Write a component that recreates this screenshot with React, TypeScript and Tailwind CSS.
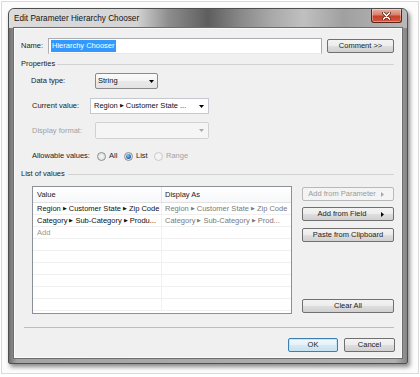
import React from 'react';

const btn =
  'flex items-center rounded-[2px] border border-[#707070] bg-[linear-gradient(#f3f3f3_0%,#ececec_48%,#dedede_52%,#d0d0d0_100%)] text-[#1b1b1b]';

function Down({ color = '#000' }: { color?: string }) {
  return (
    <svg width="5" height="3" viewBox="0 0 5 3">
      <path d="M0 0H5L2.5 3Z" fill={color} />
    </svg>
  );
}

function Right({ color = '#000' }: { color?: string }) {
  return (
    <svg width="3" height="5" viewBox="0 0 3 5">
      <path d="M0 0V5L3 2.5Z" fill={color} />
    </svg>
  );
}

function Path({ parts }: { parts: string[] }) {
  return (
    <>
      {parts.map((p, i) => (
        <React.Fragment key={i}>
          {i > 0 && <span className="px-[2px] text-[5px] align-[1px]">▶</span>}
          {p}
        </React.Fragment>
      ))}
    </>
  );
}

function Radio({ checked, disabled, label, width }: { checked?: boolean; disabled?: boolean; label: string; width: string }) {
  return (
    <div className={`flex items-center ${width}`}>
      <div
        className={`flex h-[9px] w-[9px] items-center justify-center rounded-full border ${
          disabled ? 'border-[#c9c9c9] bg-[#f4f4f4]' : 'border-[#8e8f8f] bg-[radial-gradient(circle,#f6f6f6,#d9d9d9)]'
        }`}
      >
        {checked && <div className="h-[5px] w-[5px] rounded-full bg-[radial-gradient(circle_at_40%_35%,#8fc4f2,#1d5ea6_70%)]" />}
      </div>
      <span className={`ml-[3px] ${disabled ? 'text-[#a3a3a3]' : 'text-[#1b1b1b]'}`}>{label}</span>
    </div>
  );
}

const rows: { value: string[]; display: string[]; add?: boolean }[] = [
  { value: ['Region', 'Customer State', 'Zip Code'], display: ['Region', 'Customer State', 'Zip Code'] },
  { value: ['Category', 'Sub-Category', 'Produ...'], display: ['Category', 'Sub-Category', 'Prod...'] },
  { value: ['Add'], display: [], add: true },
  { value: [], display: [] },
  { value: [], display: [] },
  { value: [], display: [] },
  { value: [], display: [] },
  { value: [], display: [] },
  { value: [], display: [] },
];

export default function App() {
  return (
    <div className="h-[377px] w-[420px] bg-white p-px font-[Liberation_Sans,Arial,sans-serif] text-[7.5px] leading-none">
      <div className="h-[373px] w-[418px] border border-[#dadada] bg-[#fcfcfc] pl-[6px] pt-[6px]">
        <div className="flex h-[356px] w-[400px] flex-col rounded-t-[6px] rounded-b-[2px] border border-[#4f4f4f] bg-[linear-gradient(90deg,#6f6f6f_0%,#a4a4a4_2%,#b0b0b0_97%,#858585_100%)] shadow-[2px_3px_4px_rgba(0,0,0,0.45)]">
          <div className="flex h-[19px] items-start justify-between rounded-t-[5px] bg-[linear-gradient(90deg,#dcdcdc_0%,#d4d4d4_32%,#8e8e8e_40%,#5e5e5e_50%,#888888_58%,#a9a9a9_66%,#c0c0c0_74%,#a0a0a0_84%,#b9b9b9_100%)]">
            <span className="pl-[5px] pt-[6px] text-[8.2px] text-[#111]">Edit Parameter Hierarchy Chooser</span>
            <div className="mr-[5px] flex h-[14px] w-[31px] items-center justify-center rounded-b-[3px] rounded-t-[1px] border border-t-0 border-[#5e2318] bg-[linear-gradient(#eab0a2_0%,#d9806c_45%,#c4412a_55%,#d3563d_100%)] shadow-[inset_0_0_0_1px_rgba(255,255,255,0.35)]">
              <svg width="9" height="8" viewBox="0 0 9 8">
                <path d="M1.5 1L7.5 7M7.5 1L1.5 7" stroke="#4a1a12" strokeWidth="3" strokeLinecap="round" />
                <path d="M1.5 1L7.5 7M7.5 1L1.5 7" stroke="#ffffff" strokeWidth="1.7" strokeLinecap="round" />
              </svg>
            </div>
          </div>

          <div className="mx-[5px] flex h-[330px] flex-col bg-[#f0f0f0] shadow-[0_0_0_1px_#6c6c6c,inset_0_0_0_1px_#fbfbfb]">
            <div className="mt-[10px] flex h-[16px] items-center pl-[7px]">
              <span className="w-[27px] text-[#1b1b1b]">Name:</span>
              <div className="flex h-[16px] w-[274px] items-center border border-[#abadb3] border-b-[#e3e9ef] bg-white pl-[2px]">
                <span className="bg-[#3399ff] px-px py-[2px] text-white">Hierarchy Chooser</span>
              </div>
              <div className={`${btn} ml-[5px] h-[14px] w-[67px] justify-center`}>Comment &gt;&gt;</div>
            </div>

            <div className="mt-[5px] flex h-[10px] items-center pl-[7px] pr-[8px]">
              <span className="text-[#1b1b1b]">Properties</span>
              <div className="ml-[2px] h-px flex-1 bg-[#d2d2d2]" />
            </div>

            <div className="mt-[4px] flex h-[16px] items-center pl-[17px]">
              <span className="w-[64px] text-[#1b1b1b]">Data type:</span>
              <div className="flex h-[16px] w-[63px] items-center justify-between rounded-[2px] border border-[#8a8a8a] bg-[linear-gradient(#fbfbfb_0%,#f3f3f3_50%,#e9e9e9_51%,#e3e3e3_100%)] pl-[2px] pr-[3px] text-[#111]">
                <span>String</span>
                <Down />
              </div>
            </div>

            <div className="mt-[9px] flex h-[16px] items-center pl-[18px]">
              <span className="w-[58px] text-[#1b1b1b]">Current value:</span>
              <div className="flex h-[16px] w-[119px] items-center justify-between border border-[#c5c8cf] bg-white pl-[3px] pr-[4px] text-[#111]">
                <span>
                  <Path parts={['Region', 'Customer State ...']} />
                </span>
                <Down />
              </div>
            </div>

            <div className="mt-[8px] flex h-[17px] items-center pl-[18px]">
              <span className="w-[63px] text-[#a2a2a2]">Display format:</span>
              <div className="flex h-[17px] w-[114px] items-center justify-end rounded-[2px] border border-[#d1d1d1] bg-[#f5f5f5] pr-[4px]">
                <Down color="#a8a8a8" />
              </div>
            </div>

            <div className="mt-[11px] flex h-[12px] items-center pl-[18px]">
              <span className="w-[65px] text-[#1b1b1b]">Allowable values:</span>
              <Radio label="All" width="w-[27px]" />
              <Radio label="List" checked width="w-[30px]" />
              <Radio label="Range" disabled width="w-[40px]" />
            </div>

            <div className="mt-[7px] flex h-[10px] items-center pl-[7px] pr-[8px]">
              <span className="text-[#1b1b1b]">List of values</span>
              <div className="ml-[3px] h-px flex-1 bg-[#d2d2d2]" />
            </div>

            <div className="mt-[7px] flex h-[128px] pl-[18px]">
              <div className="flex w-[260px] flex-col border border-[#8c9098] bg-white">
                <div className="flex h-[16px] border-b border-[#e2e2e2] bg-[linear-gradient(#ffffff,#f7f8fa)] text-[#1b1b1b]">
                  <div className="flex w-[129px] items-center border-r border-[#e4e4e4] pl-[4px]">Value</div>
                  <div className="flex flex-1 items-center pl-[3px]">Display As</div>
                </div>
                {rows.map((r, i) => (
                  <div key={i} className="flex h-[12px] border-b border-[#f0f0f0]">
                    <div className={`flex w-[129px] items-center border-r border-[#f0f0f0] pl-[4px] ${r.add ? 'text-[#979797]' : 'text-[#111]'}`}>
                      {r.value.length > 0 && <Path parts={r.value} />}
                    </div>
                    <div className="flex flex-1 items-center pl-[3px] text-[#7a7a7a]">
                      {r.display.length > 0 && <Path parts={r.display} />}
                    </div>
                  </div>
                ))}
              </div>

              <div className="ml-[10px] flex w-[92px] flex-col">
                <div className="mt-px flex h-[14px] items-center rounded-[2px] border border-[#b7b9bb] bg-[#f4f4f4] pr-[9px] text-[#9b9b9b]">
                  <span className="flex-1 text-center">Add from Parameter</span>
                  <Right color="#a8a8a8" />
                </div>
                <div className={`${btn} mt-[6px] h-[14px] pr-[9px]`}>
                  <span className="flex-1 text-center">Add from Field</span>
                  <Right />
                </div>
                <div className={`${btn} mt-[7px] h-[14px] justify-center`}>Paste from Clipboard</div>
                <div className="flex-1" />
                <div className={`${btn} mb-px h-[14px] justify-center`}>Clear All</div>
              </div>
            </div>

            <div className="ml-[10px] mr-[8px] mt-[13px] h-px bg-[#bdbdbd]" />

            <div className="mt-[10px] flex justify-end gap-[6px] pr-[7px]">
              <div className="flex h-[14px] w-[50px] items-center justify-center rounded-[2px] border border-[#3c7fb1] bg-[linear-gradient(#f2f8fc_0%,#e6f1f9_48%,#d6e8f5_52%,#c8dff0_100%)] text-[#1b1b1b] shadow-[inset_0_0_0_1px_#c4e5f6]">
                OK
              </div>
              <div className={`${btn} h-[14px] w-[51px] justify-center`}>Cancel</div>
            </div>
          </div>
        </div>
      </div>
    </div>
  );
}
